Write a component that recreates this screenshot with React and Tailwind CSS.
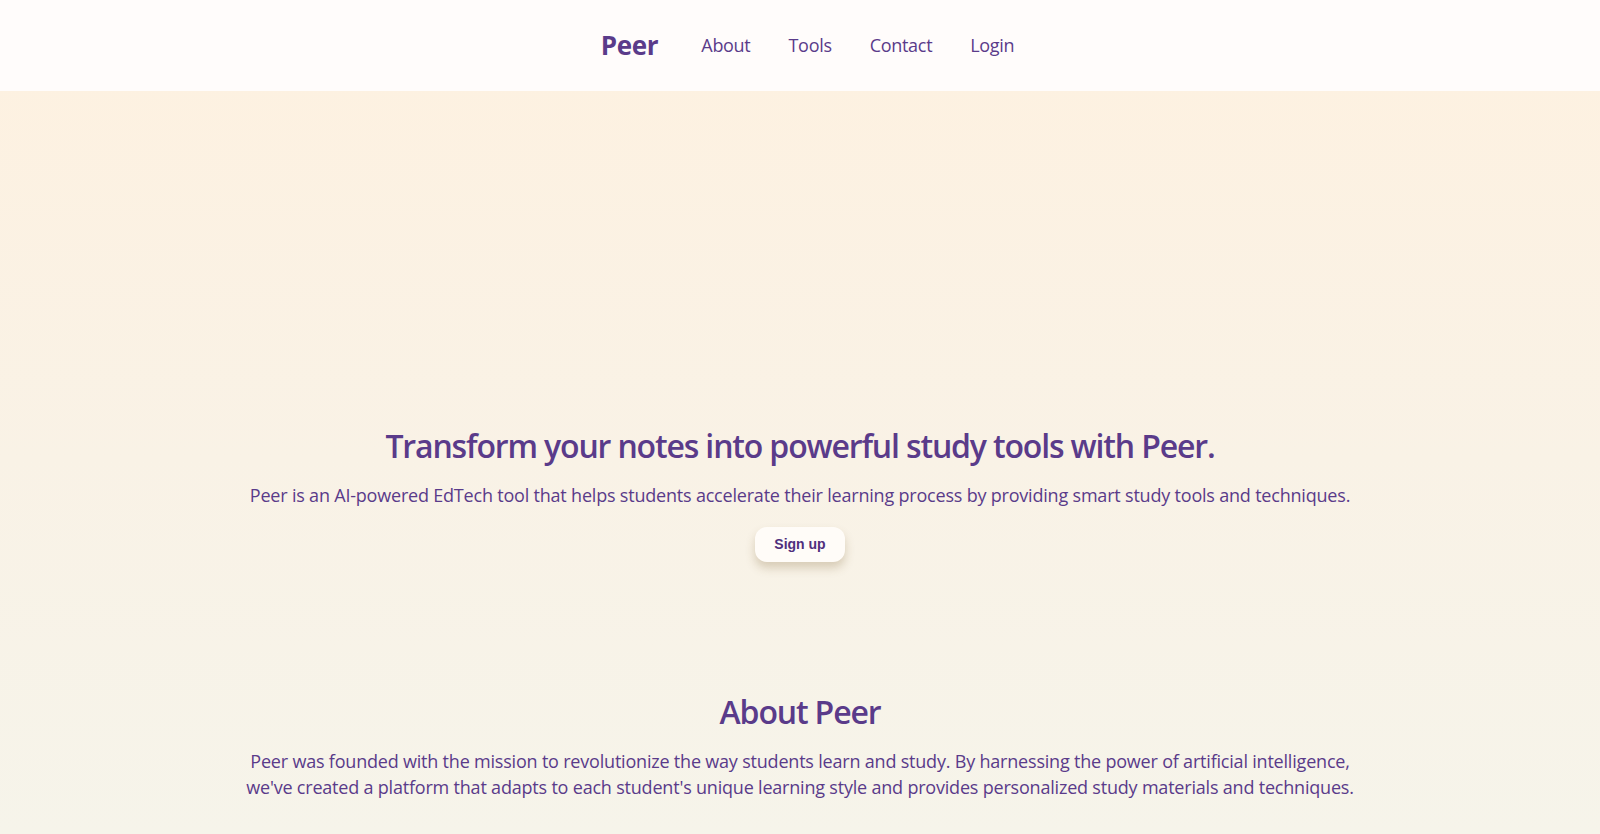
import React from "react";

const navItems = ["About", "Tools", "Contact", "Login"];

function Header() {
  return (
    <header className="h-[91px] bg-[#fffcfb] flex items-center justify-center pl-[15px]">
      <nav className="flex items-center">
        <a className="text-[26px] font-bold tracking-[-0.3px] text-[#5a3b8a] mr-[43px]">Peer</a>
        <ul className="flex items-center gap-[38px]">
          {navItems.map((item) => (
            <li key={item} className="text-[18px] tracking-[-0.3px] text-[#5a3b8a]">
              {item}
            </li>
          ))}
        </ul>
      </nav>
    </header>
  );
}

export default function App() {
  return (
    <div
      className="min-h-[834px] text-[#5a3b8a] bg-[linear-gradient(180deg,#fef1e0_0%,#f9f2e6_55%,#f6f4ea_100%)]"
      style={{ fontFamily: '"Open Sans", sans-serif' }}
    >
      <Header />
      <main className="flex flex-col items-center">
        <section className="pt-[336px] flex flex-col items-center text-center">
          <h1 className="text-[32px] font-semibold leading-[38px] tracking-[-1.15px]">
            Transform your notes into powerful study tools with Peer.
          </h1>
          <p className="mt-[17px] text-[18px] leading-[27px] tracking-[-0.2px]">
            Peer is an AI-powered EdTech tool that helps students accelerate their
            learning process by providing smart study tools and techniques.
          </p>
          <button
            className="mt-[18px] h-[35px] px-[19px] rounded-[12px] bg-[#fffcf8] text-[14px] font-bold text-[#4f2f7d] shadow-[0_6px_10px_rgba(120,90,40,0.25)]"
            style={{ fontFamily: '"Liberation Sans", Arial, sans-serif' }}
          >
            Sign up
          </button>
        </section>
        <section className="pt-[131px] flex flex-col items-center text-center">
          <h2 className="text-[32px] font-semibold leading-[38px] tracking-[-1.15px]">About Peer</h2>
          <p className="mt-[17px] text-[18px] leading-[26px] tracking-[-0.2px] max-w-[1120px]">
            Peer was founded with the mission to revolutionize the way students
            learn and study. By harnessing the power of artificial intelligence,
            we've created a platform that adapts to each student's unique learning
            style and provides personalized study materials and techniques.
          </p>
        </section>
      </main>
    </div>
  );
}
